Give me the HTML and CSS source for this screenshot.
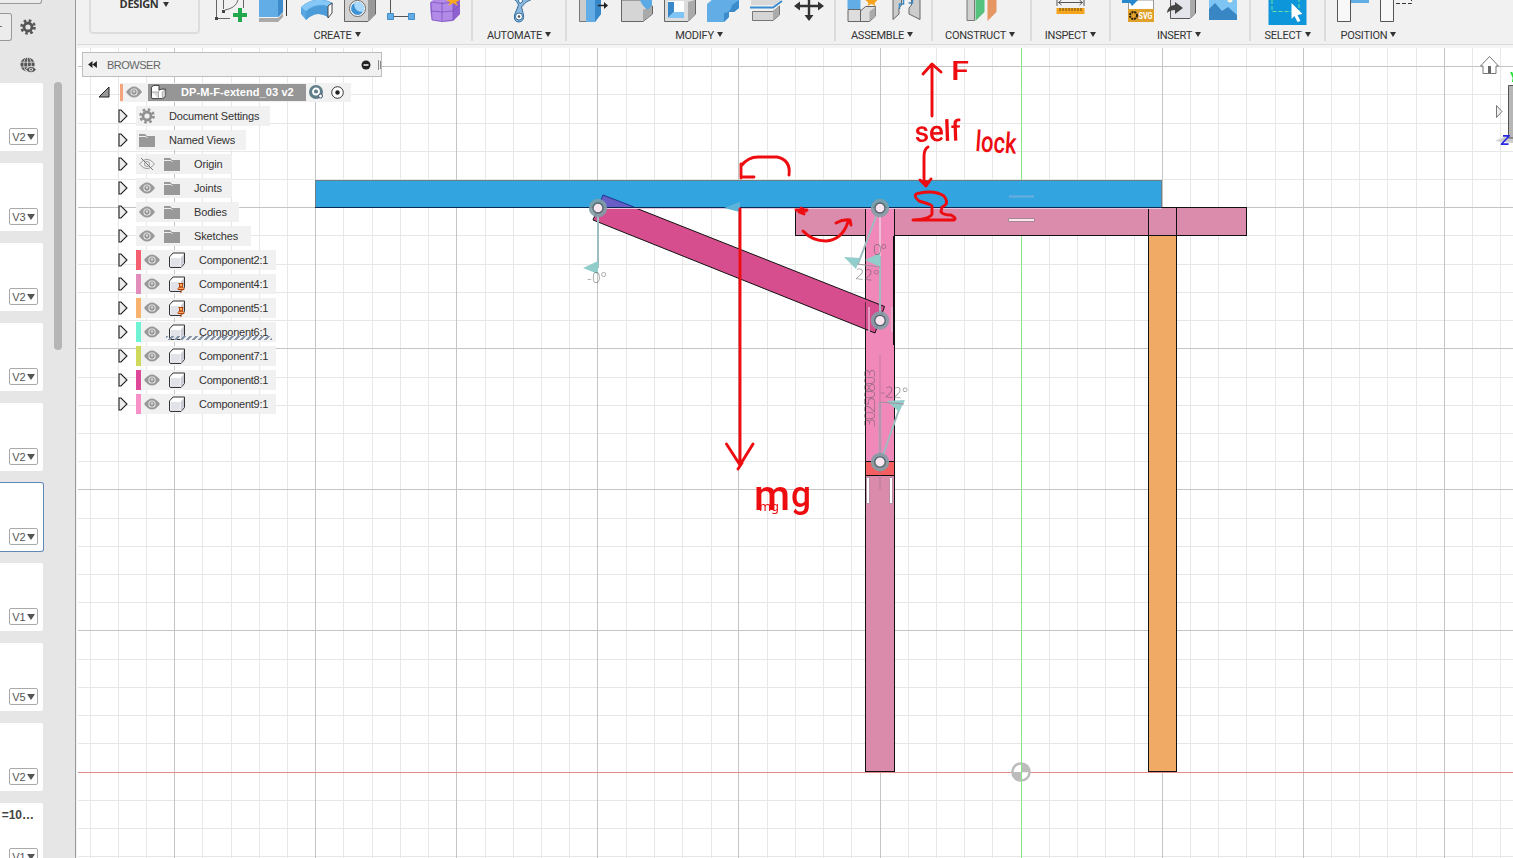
FILE: index.html
```html
<!DOCTYPE html>
<html lang="en">
<head>
<meta charset="utf-8">
<title>DP-M-F-extend_03 v2</title>
<link rel="stylesheet" href="styles.css">
</head>
<body>
<svg class="defs" width="0" height="0">
  <symbol id="eye" viewBox="0 0 16 12"><path d="M0 6Q8-5 16 6Q8 17 0 6Z" fill="#999"/><circle cx="8" cy="6" r="3.6" fill="#f2f2f2"/><circle cx="8" cy="6" r="2.7" fill="#999"/><circle cx="8" cy="5.600" r="1" fill="#eee"/></symbol>
  <symbol id="eyeoff" viewBox="0 0 16 12"><g fill="none" stroke="#999"><path d="M.5 6Q8-3.500 15.500 6Q8 15.500.5 6Z"/><circle cx="8" cy="6" r="2.500"/><path d="M2 0L14 12" stroke="#777"/></g></symbol>
  <symbol id="folder" viewBox="0 0 16 13"><path d="M0 0H6L8 2H16V13H0Z" fill="#999"/><path d="M0 2.500H7L8.500 4" stroke="#eee" fill="none"/></symbol>
  <symbol id="gear" viewBox="0 0 16 16"><circle cx="8" cy="8" r="6.500" fill="none" stroke="currentColor" stroke-width="2.600" stroke-dasharray="2.550"/><circle cx="8" cy="8" r="4" fill="none" stroke="currentColor" stroke-width="2.800"/></symbol>
  <symbol id="exp" viewBox="0 0 10 14"><path d="M1 1H3L9 7L3 13H1Z" fill="#ececec" stroke="#222" stroke-width="1.100"/></symbol>
  <symbol id="cube" viewBox="0 0 18 17"><path d="M1.500 5L5 1H16.500V11.500L13 15.500H3Q1.500 15.500 1.500 14Z" fill="#fff" stroke="#333"/><path d="M2.500 6H12.500V15H3.500L2.500 14Z" fill="#e2e3e8"/><path d="M13 5.500L16 2V11L13 15Z" fill="#c8cbd2"/></symbol>
  <symbol id="pincube" viewBox="0 0 18 17"><use href="#cube" width="18" height="17"/><path d="M10.500 7.500H15.500M11.500 8V11H14.500V8M10 13.500V12.500L11.500 11H14.500L16 12.500V13.500ZM13 13.500V17" fill="#ffb060" stroke="#b5420f"/></symbol>
</svg>

<aside class="side">
  <div class="side-tools">
    <div class="field f1"></div>
    <div class="field f2"><svg width="3" height="26" viewBox="0 0 3 26"><path d="M0 12.500H2" stroke="#777"/></svg></div>
    <svg class="cog"><use href="#gear"/></svg>
    <svg class="globe" viewBox="0 0 18 18"><circle cx="8" cy="8" r="7.500" fill="#555"/><g fill="none" stroke="#e6e6e6" stroke-width=".8"><path d="M8 0V16M0 5.500H16M0 10.500H16"/><ellipse cx="8" cy="8" rx="4" ry="8"/></g><path d="M6 13.500Q11.500 6 17.500 13.500Q11.500 20 6 13.500Z" fill="#555" stroke="#e6e6e6"/><circle cx="11.700" cy="13.300" r="2" fill="#eee"/><circle cx="11.700" cy="13.300" r="1" fill="#555"/></svg>
  </div>
  <div class="side-body">
    <div class="cards">
      <div class="card"><span class="ver">V2<i></i></span></div>
      <div class="card"><span class="ver">V3<i></i></span></div>
      <div class="card"><span class="ver">V2<i></i></span></div>
      <div class="card"><span class="ver">V2<i></i></span></div>
      <div class="card"><span class="ver">V2<i></i></span></div>
      <div class="card on"><span class="ver">V2<i></i></span></div>
      <div class="card"><span class="ver">V1<i></i></span></div>
      <div class="card"><span class="ver">V5<i></i></span></div>
      <div class="card"><span class="ver">V2<i></i></span></div>
      <div class="card"><b>=10…</b><span class="ver">V1<i></i></span></div>
    </div>
    <div class="thumb"></div>
  </div>
</aside>

<main class="main">
  <header class="bar">
    <div class="design">DESIGN<i></i></div>
    <section class="grp create">
      <div class="icons">
        <svg viewBox="209 0 43 26"><path d="M216.500 0V18M218 18.500H230M243.500 0V8M225 10Q236 8 238 0M223.500 0V9" fill="none" stroke="#666"/><path d="M215 17h3v3h-3zM222 10h3v3h-3z" fill="#444"/><path d="M238 8H242V13H247V17H242V22H238V17H233V13H238Z" fill="#23a94b"/></svg>
        <svg viewBox="252 0 43 26"><path d="M259 0H283V12L278 17H259Z" fill="#63ade6"/><path d="M278 0H283V12L278 17Z" fill="#3d8bcb"/><path d="M259 18H278L283 13V17L278 22H259Z" fill="#aaa"/><path d="M286.500 0V16" stroke="#333"/></svg>
        <svg viewBox="295 0 43 26"><path d="M301 7Q316-6 333 3L328 17Q316 10 306 20L301 14Z" fill="#5aa8e3"/><path d="M306 11Q317 4 328 7V17Q317 10 306 20Z" fill="#4c9cd9"/><path d="M301 7Q316-5 331 3L328 6Q316 2 306 11Z" fill="#85c8f7"/><path d="M328 6L332 3V13L328 18Z" fill="#fff" stroke="#444"/></svg>
        <svg viewBox="338 0 43 26"><path d="M344.500 0V21.500H368L375.500 14V0" fill="#d2d2d2" stroke="#666"/><path d="M368 0H375V14L368 21Z" fill="#999"/><circle cx="357.500" cy="8.500" r="8" fill="#fff" stroke="#666"/><circle cx="357.500" cy="8.500" r="6.500" fill="#3d92d5"/><path d="M354 3Q354 12 363 12A6.500 6.500 0 0 0 354 3Z" fill="#a8d8fb"/></svg>
        <svg viewBox="381 0 43 26"><path d="M390.500 0V13M394 16.500H408" stroke="#555"/><path d="M387.500 13.500h6v6h-6zM408.500 13.500h6v6h-6z" fill="#63ade6" stroke="#458dc5"/></svg>
        <svg viewBox="424 0 43 26"><path d="M430 3L435-2H460V14L453 21Q442 23 432 20Q430 14 430 3Z" fill="#b28be9"/><path d="M453 3L460-1V14L453 21Z" fill="#8f60d0"/><path d="M431 2Q442 5 453 2V20Q442 23 432 20ZM442 2V22M431 11Q443 13 453 11L460 5" fill="none" stroke="#7d52bd" stroke-width=".8"/><path d="M453-5L455 0H460L456 2L458 6L453 3L448 6L450 2L446 0Z" fill="#f8a91e"/></svg>
      </div><div class="lab">CREATE<i></i></div>
    </section>
    <section class="grp automate">
      <div class="icons"><svg viewBox="497.500 0 43 26"><path d="M512-2Q517 1 518 5L514 15Q513 22 518.500 22Q524 21 523 15L521 7Q525 1 532-1" fill="#8bb8dc" stroke="#346f9f"/><circle cx="518.500" cy="16.500" r="3.500" fill="#fff" stroke="#346f9f"/><circle cx="518.500" cy="16.500" r="1.300" fill="#555"/><circle cx="520" cy="1" r="2" fill="#fff" stroke="#346f9f"/></svg></div>
      <div class="lab">AUTOMATE<i></i></div>
    </section>
    <section class="grp modify">
      <div class="icons">
        <svg viewBox="572 0 43 26"><path d="M579.500 0V21.500H587V0" fill="#ccc" stroke="#777"/><path d="M586 0H601V14L595 22H586Z" fill="#63ade6"/><path d="M595 0H601V14L595 22Z" fill="#3788c8"/><path d="M598 5.500H606" stroke="#222" stroke-width="1.500"/><path d="M604 2L608 5.500L604 9Z" fill="#222"/></svg>
        <svg viewBox="615 0 43 26"><path d="M621.500 0V21.500H643L652.500 14V6Q645 2 643 0Z" fill="#d5d5d5" stroke="#666"/><path d="M643 10L652 5V14L643 21Z" fill="#aaa"/><path d="M640 0Q642 6 648 10L652 5V0Z" fill="#5caae5"/></svg>
        <svg viewBox="658 0 43 26"><path d="M664.500 0V21.500H688L695.500 14V0" fill="#ddd" stroke="#666"/><path d="M688 2L695 0V14L688 21Z" fill="#aaa"/><path d="M668 1H684V18H668Z" fill="#fff"/><path d="M668 2H674V12L668 18Z" fill="#3988c9"/><path d="M674 12H684V18H668Z" fill="#7fc4f5"/></svg>
        <svg viewBox="701 0 43 26"><path d="M707 4L713-1H739V8L734 12H729V17L724 22H707Z" fill="#63ade6"/><path d="M732 5L739 0V8L734 12H729V17L724 22V13Q731 12 732 5Z" fill="#3c8ccc"/></svg>
        <svg viewBox="744 0 43 26"><path d="M751 0H781L774 5H751Z" fill="#d8d8d8"/><path d="M750 7.500H773L782 1" fill="none" stroke="#3b8dcf" stroke-width="2"/><path d="M752.500 11.500H773L779.500 6V15L773 20.500H752.500Z" fill="#d5d5d5" stroke="#777"/><path d="M773 11L779 6V15L773 20Z" fill="#aaa"/></svg>
        <svg viewBox="787 0 43 26"><path d="M809-2V16M797 6H821" stroke="#333" stroke-width="2.400"/><path d="M794 6L800 1.500V10.500ZM824 6L818 1.500V10.500ZM809 21L804.500 15H813.500Z" fill="#333"/></svg>
      </div><div class="lab">MODIFY<i></i></div>
    </section>
    <section class="grp assemble">
      <div class="icons">
        <svg viewBox="840.500 0 43 26"><path d="M847 0H860V9H847Z" fill="#63ade6"/><path d="M847.500 9.500H860V21.500H847.500ZM860 11L865 6.500H875V16L869 21.500H860Z" fill="#ddd" stroke="#666"/><path d="M869 11.500L875 7V16L869 21Z" fill="#aaa"/><path d="M871-4L873 0L877 0L874 3L875 6L871 4L867 6L868 3L865 0Z" fill="#f5a21d"/></svg>
        <svg viewBox="883.500 0 43 26"><path d="M892.500 0V19.500L898.500 14V8L901 5V0M919.500 0V19.500L908.500 14V8L911 5V0" fill="#ccc" stroke="#666"/><path d="M899 9V4H903V0M908 3H912V0" fill="none" stroke="#3b8ac5" stroke-width="1.500"/></svg>
      </div><div class="lab">ASSEMBLE<i></i></div>
    </section>
    <section class="grp construct">
      <div class="icons"><svg viewBox="960.500 0 43 26"><path d="M967.500 0V20.500H975V0" fill="#d0d0d0" stroke="#777"/><path d="M976 0H985V12L976 21Z" fill="#55c27d"/><path d="M988 0H997V12L988 21Z" fill="#e59662"/></svg></div>
      <div class="lab">CONSTRUCT<i></i></div>
    </section>
    <section class="grp inspect">
      <div class="icons"><svg viewBox="1049.500 0 43 26"><path d="M1057.500 0V6M1084.500 0V6M1059 2.500H1083M1062 0L1059 2.500L1062 5M1080 0L1083 2.500L1080 5" fill="none" stroke="#555"/><path d="M1057 8H1085V14H1057Z" fill="#f5a51b"/><path d="M1060.500 8V11M1063.500 8V11M1066.500 8V11M1069.500 8V11M1072.500 8V11M1075.500 8V11M1078.500 8V11M1081.500 8V11" stroke="#684910"/></svg></div>
      <div class="lab">INSPECT<i></i></div>
    </section>
    <section class="grp insert">
      <div class="icons">
        <svg viewBox="1116 0 43 26"><path d="M1128.500 0H1153.500V10H1128.500Z" fill="#fff" stroke="#999"/><path d="M1122 0H1138L1132 6L1130 3H1122Z" fill="#2788ce"/><path d="M1128 9H1154V22H1128Z" fill="#e0a02c"/><circle cx="1133.500" cy="15.500" r="3.500" fill="none" stroke="#2c2109" stroke-width="2" stroke-dasharray="2 .8"/><text x="1138.500" y="19" class="svgtag" textLength="14" lengthAdjust="spacingAndGlyphs">SVG</text></svg>
        <svg viewBox="1159 0 43 26"><path d="M1170.500 0V18.500H1190L1195.500 13V0" fill="#e4e5ea" stroke="#555"/><path d="M1190 0H1195V13L1190 18Z" fill="#aaa"/><path d="M1167 13Q1168 5 1175 5V2L1183 8L1175 14V10Q1170 10 1167 13Z" fill="#444"/></svg>
        <svg viewBox="1202 0 43 26"><path d="M1209 0H1237V20H1209Z" fill="#7fc5f4"/><path d="M1209 9L1215 3L1222 11L1228 7L1237 15V20H1209Z" fill="#3886c4"/><circle cx="1230" cy="0" r="2.500" fill="#fff5d8"/></svg>
      </div><div class="lab">INSERT<i></i></div>
    </section>
    <section class="grp select">
      <div class="icons"><svg viewBox="1266.500 0 43 26"><path d="M1269 0H1307V25H1269Z" fill="#0d96d9"/><path d="M1272.500 0V11.500H1299.500V0" fill="none" stroke="#6fe0a2" stroke-dasharray="4 2"/><path d="M1292 3L1303 14L1298 15L1301 21L1298 22L1295 16L1292 19Z" fill="#fff"/></svg></div>
      <div class="lab">SELECT<i></i></div>
    </section>
    <section class="grp position">
      <div class="icons"><svg viewBox="1326 0 43 26"><path d="M1350 0H1368V3H1350Z" fill="#63ade6"/><path d="M1336.500-1V21.500H1349.500V-1" fill="#f8f8f8" stroke="#555"/></svg>
      <svg viewBox="1369 0 43 26"><path d="M1379.500-1V21.500H1392.500V-1" fill="#f8f8f8" stroke="#555"/><path d="M1395 3.500H1410.500V0" fill="none" stroke="#333" stroke-dasharray="4 2"/></svg></div>
      <div class="lab">POSITION<i></i></div>
    </section>
  </header>

  <div class="view">
    <svg class="scene" viewBox="77 48 1436 810">
      <g shape-rendering="crispEdges" fill="none">
        <path stroke="#e7e7e7" d="M90.500 48V858M118.500 48V858M146.500 48V858M202.500 48V858M231.500 48V858M259.500 48V858M287.500 48V858M343.500 48V858M372.500 48V858M400.500 48V858M428.500 48V858M485.500 48V858M513.500 48V858M541.500 48V858M569.500 48V858M626.500 48V858M654.500 48V858M682.500 48V858M711.500 48V858M767.500 48V858M795.500 48V858M823.500 48V858M851.500 48V858M908.500 48V858M936.500 48V858M964.500 48V858M992.500 48V858M1049.500 48V858M1077.500 48V858M1105.500 48V858M1134.500 48V858M1190.500 48V858M1218.500 48V858M1246.500 48V858M1275.500 48V858M1331.500 48V858M1359.500 48V858M1387.500 48V858M1416.500 48V858M1472.500 48V858M1500.500 48V858"/>
        <path stroke="#e7e7e7" d="M78 94.500H1513M78 123.500H1513M78 151.500H1513M78 179.500H1513M78 235.500H1513M78 264.500H1513M78 292.500H1513M78 320.500H1513M78 377.500H1513M78 405.500H1513M78 433.500H1513M78 461.500H1513M78 518.500H1513M78 546.500H1513M78 574.500H1513M78 602.500H1513M78 659.500H1513M78 687.500H1513M78 715.500H1513M78 743.500H1513M78 800.500H1513M78 828.500H1513M78 856.500H1513"/>
        <path stroke="#c4c4c4" d="M174.500 48V858M315.500 48V858M456.500 48V858M597.500 48V858M738.500 48V858M880.500 48V858M1162.500 48V858M1303.500 48V858M1444.500 48V858M78 66.500H1513M78 207.500H1513M78 348.500H1513M78 489.500H1513M78 630.500H1513"/>
        <path stroke="#e58b8b" d="M78 772.500H1513"/><path stroke="#86e886" d="M1021.500 48V858"/>
      </g>
      <circle cx="1021" cy="772" r="8.600" fill="#fff" fill-opacity=".8" stroke="#bcbcbc" stroke-width="2.500"/>
      <path d="M1021 772V763A9 9 0 0 1 1030 772ZM1021 772V781A9 9 0 0 1 1012 772Z" fill="#bcbcbc"/><path d="M1021.500 762V782" stroke="#86e886"/>

      <g shape-rendering="crispEdges" stroke="#111">
        <path d="M1148.500 235.500H1176.500V771.500H1148.500Z" fill="#f0aa65"/>
        <path d="M795.500 207.500H1246.500V235.500H795.500Z" fill="#db8cac"/>
        <path d="M1148.500 208V235M1176.500 208V235"/>
        <path d="M865.500 461H894.500V771.500H865.500Z" fill="#da8aab"/>
        <path d="M865.500 207.500H894.500V461H865.500Z" fill="#f088b9"/>
        <path d="M865.500 461.500H894.500V475.500H865.500Z" fill="#f55f62"/>
        <path d="M893.500 236V345"/>
      </g>
      <path d="M603 195L884.500 306.500L875 333L593 220Z" fill="#d74e8f" stroke="#111"/>
      <path d="M315.500 180.500H1161.500V207.500H315.500Z" fill="#32a4df" stroke="#6c7f89" shape-rendering="crispEdges"/>
      <path d="M315 207.500H1162" stroke="#092b55" shape-rendering="crispEdges"/>
      <path d="M603 195L634 207H598.500Z" fill="#675dc5"/><path d="M603 195L634 207M603 195L599 205" stroke="#19368d"/>
      <path d="M604 208.500H1162" stroke="#ebc4db"/>
      <path d="M865.500 302V329M894.500 306V332" stroke="#111" opacity=".6"/>
      <path d="M869 307V332M892 307V332" stroke="#e7b6d1" stroke-width="1.500"/>
      <path d="M866.500 477.500H869.500V503.500H866.500ZM889.500 477.500H892.500V503.500H889.500Z" fill="#fff" stroke="#b893a6"/>
      <path d="M1008.500 218.500H1034.500V221.500H1008.500Z" fill="#fbe5ef" stroke="#a98696"/><path d="M1009 196.500H1034" stroke="#6dacdf" stroke-width="2"/>
      <path d="M724 208L740 202V212Z" fill="#5eb4d8"/>
      <g fill="none" stroke="#9dbdc0" stroke-width="2"><path d="M598 214V268M877 214L858 264M880 256V314M883 455L901 404"/></g>
      <path d="M880 214V256" stroke="#eccfe0" stroke-width="1.500"/><path d="M880 402V456" stroke="#c3a0bd" stroke-width="3"/>
      <path d="M880 355V490" stroke="#937189" opacity=".5"/>
      <path d="M583 268L598 261V274ZM844 257L860 258L856 269ZM865 260L880 253V267ZM887 401L905 400L899 412Z" fill="#91cdca"/>
      <path d="M857 264L880 267M880 402L904 404" stroke="#a1909b" fill="none"/>
      <g class="joints"><circle cx="598" cy="208" r="7.200"/><circle cx="880" cy="208" r="7.200"/><circle cx="880" cy="320.500" r="7.200"/><circle cx="880" cy="462" r="7.200"/></g>
      <g class="rings"><circle cx="598" cy="208" r="5"/><circle cx="880" cy="208" r="5"/><circle cx="880" cy="320.500" r="5.200"/><circle cx="880" cy="462" r="5.200"/></g>
      <g class="dims"><text x="587" y="283" textLength="20">-0°</text><text x="873" y="255" textLength="14">0°</text><text x="855" y="279" textLength="24" transform="rotate(5 855 279)">22°</text><text x="880" y="397" textLength="28" transform="rotate(3 880 397)">-22°</text><text transform="translate(875 427) rotate(-90)" textLength="58">30250803</text></g>

      <g class="ink">
        <path d="M740 209V466M726.500 444L740 465L753 444M738 469L742 463"/>
        <path d="M741 178V164M741 176V166Q748 157 758 157H777Q791 160 789 175M741 177H754"/>
        <path d="M796 210H807M799 212L804 214L801 208L806 211M803 231Q812 241 826 241Q842 240 848 222M836 223Q843 219 850 220L851 225"/>
        <path d="M932 116V66M923 74L932 64L941 72"/>
        <path d="M928 147Q924 149 924 157V184M920 180L926 186L931 179M922 182H929"/>
        <path d="M931 205Q926 203 919 201Q911 194 920 193Q935 190 944 196Q950 204 942 207L941 212Q943 215 951 215Q957 218 954 220L913 220Q930 219 932 214L932 206"/>
      </g>
      <g class="hand">
        <text x="951" y="80" font-size="25" textLength="18" lengthAdjust="spacingAndGlyphs">F</text>
        <text x="915" y="142" font-size="29" textLength="46" lengthAdjust="spacingAndGlyphs" transform="rotate(-2 915 142)">self</text>
        <text x="975" y="151" font-size="29" textLength="41" lengthAdjust="spacingAndGlyphs" transform="rotate(4 975 151)">lock</text>
        <text x="754" y="510" font-size="43" textLength="36" lengthAdjust="spacingAndGlyphs">m</text>
        <text x="791" y="507" font-size="36" textLength="20" lengthAdjust="spacingAndGlyphs">g</text>
      </g>
      <text x="759" y="511" class="mg" textLength="20">mg</text>

      <path d="M1480.500 66L1489.500 56.500L1498.500 66H1496V73.500H1483V66Z" fill="#fff" stroke="#777"/><path d="M1488 66H1491V73H1488Z" fill="#666"/>
      <path d="M1496.500 105.500L1502 111.500L1496.500 117.500Z" fill="#eee" stroke="#777"/>
      <path d="M1495 141L1509 135H1513V143Z" fill="#ccc"/><path d="M1508.500 85.500H1514V138H1508.500Z" fill="#b6b6b6" stroke="#555"/>
      <text x="1509" y="82" class="axis" fill="#22dd33">Y</text><text x="1501" y="145" class="axis" fill="#2929df">Z</text>
    </svg>

    <div class="browser">
      <div class="bhead"><svg class="rew" viewBox="0 0 10 8"><path d="M5 0V8L0 4ZM10 0V8L5 4Z" fill="#222"/></svg><span>BROWSER</span><svg class="minus" viewBox="0 0 20 12"><circle cx="5" cy="6" r="4.500" fill="#222"/><path d="M2.500 6H7.500" stroke="#fff" stroke-width="1.500"/><path d="M17.500 1V11M19.500 2V10" stroke="#888"/></svg></div>
      <div class="root"><svg class="open" viewBox="0 0 12 12"><path d="M11 1V11H1Z" fill="#999" stroke="#222"/></svg>
        <div class="rootbox"><i class="tag"></i><svg class="eye"><use href="#eye"/></svg><div class="title"><svg class="asm" viewBox="0 0 18 16"><path d="M1.500 3L4 1H9.500V6L12 5H16.500V12L14 15H3Q1.500 15 1.500 13Z" fill="#fff" stroke="#333"/><path d="M2 8H9V15M9 8L10 6M13 8L16 6V12L13 15Z" fill="#ddd" stroke="#888" stroke-width=".7"/></svg><b>DP-M-F-extend_03 v2</b></div>
        <svg class="rooticons" viewBox="0 0 40 16"><circle cx="7" cy="8" r="7" fill="#607d8b"/><circle cx="7" cy="7.500" r="3" fill="none" stroke="#fff" stroke-width="1.800"/><circle cx="11.500" cy="12" r="2" fill="#fff" stroke="#456"/><circle cx="28.500" cy="8.500" r="5.800" fill="#fff" stroke="#333"/><circle cx="28.500" cy="8.500" r="2.200" fill="#222"/></svg></div>
      </div>
      <div class="row"><svg class="exp"><use href="#exp"/></svg><div class="item w134"><svg class="gear"><use href="#gear"/></svg><span>Document Settings</span></div></div>
      <div class="row"><svg class="exp"><use href="#exp"/></svg><div class="item w110"><svg class="folder"><use href="#folder"/></svg><span>Named Views</span></div></div>
      <div class="row"><svg class="exp"><use href="#exp"/></svg><div class="item w96"><svg class="eye"><use href="#eyeoff"/></svg><svg class="folder"><use href="#folder"/></svg><span>Origin</span></div></div>
      <div class="row"><svg class="exp"><use href="#exp"/></svg><div class="item w96"><svg class="eye"><use href="#eye"/></svg><svg class="folder"><use href="#folder"/></svg><span>Joints</span></div></div>
      <div class="row"><svg class="exp"><use href="#exp"/></svg><div class="item w103"><svg class="eye"><use href="#eye"/></svg><svg class="folder"><use href="#folder"/></svg><span>Bodies</span></div></div>
      <div class="row"><svg class="exp"><use href="#exp"/></svg><div class="item w115"><svg class="eye"><use href="#eye"/></svg><svg class="folder"><use href="#folder"/></svg><span>Sketches</span></div></div>
      <div class="row"><svg class="exp"><use href="#exp"/></svg><div class="item comp red"><svg class="eye"><use href="#eye"/></svg><svg class="cube"><use href="#cube"/></svg><span>Component2:1</span></div></div>
      <div class="row"><svg class="exp"><use href="#exp"/></svg><div class="item comp mauve"><svg class="eye"><use href="#eye"/></svg><svg class="cube"><use href="#pincube"/></svg><span>Component4:1</span></div></div>
      <div class="row"><svg class="exp"><use href="#exp"/></svg><div class="item comp orange"><svg class="eye"><use href="#eye"/></svg><svg class="cube"><use href="#pincube"/></svg><span>Component5:1</span></div></div>
      <div class="row"><svg class="exp"><use href="#exp"/></svg><div class="item comp aqua"><svg class="eye"><use href="#eye"/></svg><svg class="cube"><use href="#cube"/></svg><span>Component6:1</span><div class="hatch"></div></div></div>
      <div class="row"><svg class="exp"><use href="#exp"/></svg><div class="item comp lime"><svg class="eye"><use href="#eye"/></svg><svg class="cube"><use href="#cube"/></svg><span>Component7:1</span></div></div>
      <div class="row"><svg class="exp"><use href="#exp"/></svg><div class="item comp magenta"><svg class="eye"><use href="#eye"/></svg><svg class="cube"><use href="#cube"/></svg><span>Component8:1</span></div></div>
      <div class="row"><svg class="exp"><use href="#exp"/></svg><div class="item comp pink"><svg class="eye"><use href="#eye"/></svg><svg class="cube"><use href="#cube"/></svg><span>Component9:1</span></div></div>
    </div>
  </div>
</main>
</body>
</html>
```
FILE: styles.css
```css
* { box-sizing: border-box; }
body { margin: 0; width: 1513px; height: 858px; display: flex; overflow: hidden; background: #f1f1f1; font: 11px "Liberation Sans", Arial, sans-serif; color: #333; }
svg { display: block; flex: none; }
.defs { position: absolute; }

.side { width: 77px; height: 858px; flex: none; background: #e6e6e6; border-right: 1px solid #f2f2f2; box-shadow: inset -1px 0 #999; overflow: hidden; }
.side-tools { height: 83px; display: grid; grid-template-columns: 12px 1fr; grid-template-rows: 4px 9px 28px 1fr; }
.field { border: 1px solid #999; border-left: 0; background: #ececec; }
.f1 { grid-column: 1 / 3; width: 42px; border-top: 0; border-radius: 0 0 3px 0; }
.f2 { grid-row: 3; grid-column: 1; border-radius: 0 3px 3px 0; }
.cog { grid-row: 3; grid-column: 2; width: 16px; height: 16px; margin: 6px 0 0 8px; color: #555; }
.globe { grid-row: 4; grid-column: 2; width: 17px; height: 17px; margin: 16px 0 0 8px; }
.side-body { display: flex; gap: 11px; }
.cards { width: 43px; display: flex; flex-direction: column; gap: 12px; flex: none; }
.card { height: 68px; flex: none; background: #fff; border-radius: 0 2px 2px 0; padding: 0 5px 6px 0; display: flex; flex-direction: column; align-items: flex-end; justify-content: flex-end; }
.card.on { height: 70px; width: 44px; margin: -1px 0; border: 1px solid #6089b5; border-left: 0; border-radius: 0 3px 3px 0; }
.card b { font-size: 12px; color: #444; margin: 0 4px auto 0; padding-top: 5px; white-space: nowrap; }
.ver { width: 29px; height: 17px; border: 1px solid #aaa; border-radius: 2px; display: flex; align-items: center; justify-content: center; gap: 1px; font-size: 11px; color: #555; }
i { display: inline-block; border: 3px solid transparent; border-top: 5px solid currentColor; border-bottom: 0; }
.ver i { border-width: 6px 4px 0; margin-top: 1px; }
.thumb { width: 8px; height: 268px; margin-top: -1px; background: #b5b5b5; border-radius: 4px; }

.main { width: 1436px; display: flex; flex-direction: column; }
.bar { height: 48px; flex: none; display: flex; background: linear-gradient(#f1f1f1 44px, #d9d9d9 44px, #d9d9d9 45px, #f4f4f4 45px); font-family: Roboto, sans-serif; }
.design { width: 111px; height: 35px; margin: -1px 4px 0 12px; border: 2px solid #ddd; border-top: 0; border-radius: 0 0 4px 4px; font: bold 11px/10px "Open Sans", sans-serif; letter-spacing: -.35px; display: flex; justify-content: center; gap: 5px; }
.design i { margin-top: 3px; }
.grp { height: 41px; display: flex; flex-direction: column; flex: none; border-right: 2px solid #dcdcdc; overflow: hidden; }
.icons { height: 28px; flex: none; display: flex; justify-content: center; }
.icons svg { width: 43px; height: 26px; }
.lab { display: flex; flex: none; align-items: center; justify-content: center; gap: 3px; height: 13px; padding-top: 1px; letter-spacing: -.25px; white-space: nowrap; }
.lab i { margin-top: -2px; }
.create { width: 269px; }
.automate { width: 94px; }
.modify { width: 269px; }
.modify .lab, .assemble .lab, .construct .lab, .position .lab { padding-right: 3px; }
.create .lab { padding-right: 1px; }
.assemble { width: 97px; }
.construct { width: 99px; }
.inspect { width: 79px; }
.insert { width: 140px; }
.insert .lab { padding-right: 2px; }
.select { width: 75px; }
.position { width: 88px; border: 0; }
.svgtag { font: bold 9px Roboto, sans-serif; fill: #fff; }

.view { flex: 1; position: relative; background: #fff; overflow: hidden; }
.scene { position: absolute; inset: 0; width: 1436px; height: 810px; }
.joints { fill: none; stroke: #829fa6; stroke-width: 4; stroke-opacity: .9; }
.rings { fill: #f8e6f0; stroke: #53636b; stroke-width: 1.300; }
.dims { font: 300 15px "Open Sans", "Noto Sans", sans-serif; fill: #555; opacity: .65; }
.ink { fill: none; stroke: #ed0c10; stroke-width: 2.900; stroke-linecap: round; stroke-linejoin: round; }
.hand { font-family: Roboto, sans-serif; font-weight: 500; fill: #ed0c10; }
.mg { font: 13px "Noto Sans", sans-serif; fill: #ed0c10; }
.axis { font: bold italic 14px "Liberation Sans", Arial, sans-serif; }

.browser { position: absolute; left: 5px; top: 4px; width: 300px; }
.bhead { height: 25px; background: #f1f1f1; border: 1px solid #bdbdbd; display: flex; align-items: center; padding: 0 0 0 4px; color: #666; letter-spacing: -.5px; }
.rew { width: 11px; height: 7px; }
.bhead span { margin-left: 9px; }
.minus { width: 20px; height: 12px; margin-left: auto; }
.root { height: 27px; display: flex; align-items: center; padding: 3px 0 0 16px; }
.open { width: 12px; height: 12px; }
.rootbox { width: 231px; height: 19px; margin-left: 10px; background: #f1f1f1; display: flex; align-items: center; }
.tag { width: 3px; height: 17px; border: 0; background: #f4a37c; margin-right: 3px; }
.title { width: 158px; height: 17px; margin-left: 6px; background: #969696; color: #fff; display: flex; align-items: center; gap: 14px; padding-left: 2px; letter-spacing: .08px; white-space: nowrap; }
.asm { width: 17px; height: 16px; }
.rooticons { width: 40px; height: 16px; margin-left: 3px; }
.row { height: 24px; display: flex; align-items: center; padding-left: 36px; }
.exp { width: 10px; height: 14px; }
.item { height: 20px; margin-left: 8px; background: #f1f1f1; display: flex; align-items: center; padding-left: 3px; position: relative; white-space: nowrap; }
.item span { margin-left: 14px; letter-spacing: -.15px; }
.w134 { width: 134px; } .w110 { width: 110px; } .w96 { width: 96px; } .w103 { width: 103px; } .w115 { width: 115px; }
.eye { width: 16px; height: 12px; }
.folder { width: 16px; height: 13px; }
.eye + .folder { margin-left: 9px; }
.gear { width: 16px; height: 16px; color: #909090; }
.comp { width: 140px; border-left: 5px solid; }
.eye + .cube { margin-left: 8px; }
.cube { width: 18px; height: 17px; }
.comp .cube + span { margin-left: 13px; letter-spacing: -.25px; }
.red { border-color: #f55f72; } .mauve { border-color: #e38dbb; } .orange { border-color: #fab36e; } .aqua { border-color: #70f3d2; } .lime { border-color: #cfd95b; } .magenta { border-color: #df4898; } .pink { border-color: #f891c7; }
.hatch { position: absolute; left: 25px; bottom: 2px; width: 106px; height: 4px; background: repeating-linear-gradient(135deg, #8795a8 0 1.500px, transparent 1.500px 4.240px); }
```
